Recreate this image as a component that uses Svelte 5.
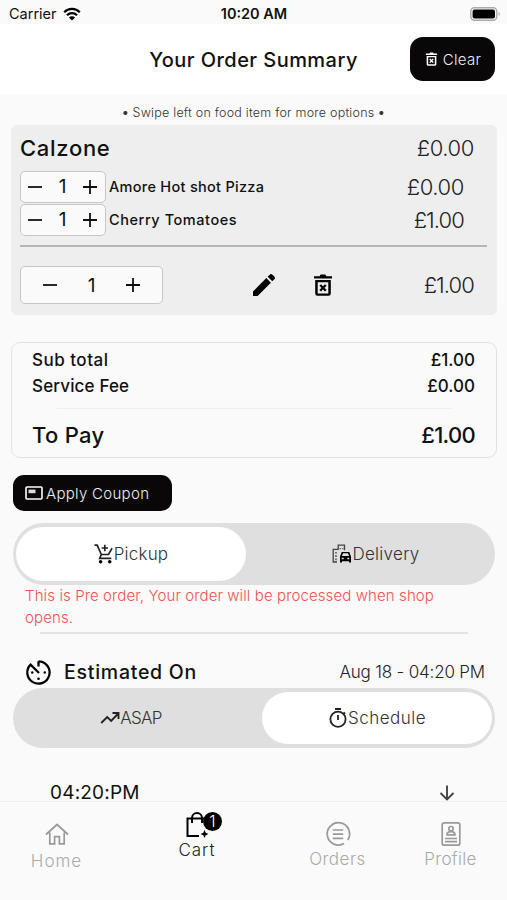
<script>
	let tabs = [
		{ name: 'Home', icon: 'home' },
		{ name: 'Cart', icon: 'bag', badge: 1 },
		{ name: 'Orders', icon: 'orders' },
		{ name: 'Profile', icon: 'profile' }
	];
	let active = $state('Cart');
	let mode = $state('Pickup');
	let time = $state('Schedule');
	let extras = $state([
		{ name: 'Amore Hot shot Pizza', qty: 1, price: 0, cls: 'amore' },
		{ name: 'Cherry Tomatoes', qty: 1, price: 1, cls: 'cherry' }
	]);
	let qty = $state(1);
	let total = $derived(extras.reduce((sum, e) => sum + e.price * e.qty, 0) * qty);
	const money = (n) => '£' + n.toFixed(2);
</script>

{#snippet trash()}
	<svg class="trash" viewBox="0 0 24 24">
		<path d="M3 3.200h5.500l1.200-1.700h4.600l1.200 1.700H21v2.400H3z" />
		<path fill-rule="evenodd" d="M4.200 7h15.600v13.500a2.200 2.200 0 0 1-2.200 2.200H6.400a2.200 2.200 0 0 1-2.200-2.200zM6.700 9.300v11.100h10.600V9.300z" />
		<path class="line" d="M9.200 12l5.600 5.800M14.800 12l-5.600 5.800" />
	</svg>
{/snippet}

{#snippet minus()}
	<svg class="sign" viewBox="0 0 16 16"><path d="M1 8h14" /></svg>
{/snippet}

{#snippet plus()}
	<svg class="sign" viewBox="0 0 16 16"><path d="M1 8h14M8 1v14" /></svg>
{/snippet}

<div class="app">
	<div class="status">
		<span class="carrier">Carrier
			<svg class="wifi" viewBox="0 0 18 14">
				<path d="M1.200 5.200a11 11 0 0 1 15.600 0M4 8.300a7 7 0 0 1 10 0" />
				<path class="dot" d="M9 13.600L5.900 10.500a4.400 4.400 0 0 1 6.200 0z" />
			</svg>
		</span>
		<b class="clock">10:20 AM</b>
		<svg class="battery" viewBox="0 0 32 14">
			<rect x=".8" y=".8" width="26" height="12.400" rx="3.600" fill="none" stroke="#aaa" stroke-width="1.400" />
			<rect x="2.600" y="2.600" width="22.400" height="8.800" rx="2" />
			<path d="M28.700 4.800q2.200 2.200 0 4.400z" fill="#aaa" />
		</svg>
	</div>

	<header>
		<h1>Your Order Summary</h1>
		<button class="clear">{@render trash()}<span>Clear</span></button>
	</header>

	<main>
		<p class="hint">• <span>Swipe left on food item for more options</span> •</p>

		<section class="item">
			<div class="item-head">
				<h2>Calzone</h2>
				<span class="price zero">£0.00</span>
			</div>
			{#each extras as extra}
				<div class="extra">
					<div class="stepper small">
						<button aria-label="less" onclick={() => extra.qty > 0 && extra.qty--}>{@render minus()}</button>
						<span>{extra.qty}</span>
						<button aria-label="more" onclick={() => extra.qty++}>{@render plus()}</button>
					</div>
					<span class="name {extra.cls}">{extra.name}</span>
					<span class="price" class:zero={extra.price === 0}>{money(extra.price)}</span>
				</div>
			{/each}
			<div class="item-foot">
				<div class="stepper">
					<button aria-label="less" onclick={() => qty > 1 && qty--}>{@render minus()}</button>
					<span>{qty}</span>
					<button aria-label="more" onclick={() => qty++}>{@render plus()}</button>
				</div>
				<svg class="pencil" viewBox="0 0 24 24">
					<path d="M1 18.400L14.300 5.100l4.600 4.600L5.600 23H1zM15.700 3.700l2-2a2 2 0 0 1 2.800 0l1.800 1.800a2 2 0 0 1 0 2.800l-2 2z" />
				</svg>
				{@render trash()}
				<span class="price">{money(total)}</span>
			</div>
		</section>

		<section class="totals">
			<div class="row"><span class="sub">Sub total</span><span class="amount">{money(total)}</span></div>
			<div class="row"><span class="fee">Service Fee</span><span class="amount">£0.00</span></div>
			<hr />
			<div class="row pay"><span>To Pay</span><span class="amount">{money(total)}</span></div>
		</section>

		<button class="coupon">
			<svg viewBox="0 0 18 14">
				<rect x="1" y="1" width="16" height="12" rx="1" fill="none" stroke="#fff" stroke-width="1.600" />
				<path d="M3.500 3.600h7v3.600h-7z" fill="#ddd" />
			</svg>
			<span>Apply Coupon</span>
		</button>

		<div class="toggle mode">
			<button class:on={mode === 'Pickup'} onclick={() => (mode = 'Pickup')}>
				<svg viewBox="0 0 20 20">
					<path d="M.5 1.200h2.700l4.100 9.300h7.200l3.600-6.300M7.300 10.500L5.700 14.300h11.600M10.800.8v6.400M7.600 4h6.400" fill="none" stroke="#222" stroke-width="1.700" />
					<circle cx="6.600" cy="17.700" r="1.800" /><circle cx="15.700" cy="17.700" r="1.800" />
				</svg>
				<span class="pickup">Pickup</span>
			</button>
			<button class:on={mode === 'Delivery'} onclick={() => (mode = 'Delivery')}>
				<svg viewBox="0 0 20 20">
					<path d="M5 18H1.200V5.300h5V1.200h6.300v5" fill="none" stroke="#444" stroke-width="1.300" />
					<path d="M3.200 8h1.600v1.600H3.200zm0 3.300h1.600v1.600H3.200zm0 3.300h1.600v1.600H3.200zM7.500 4h1.300v1.300H7.500zm2.700 0h1.300v1.300h-1.300z" fill="#555" />
					<path fill-rule="evenodd" d="M8 12.500l1.700-4.500h7.600l1.700 4.500V18.500h-2v-1.300H10v1.300H8zm2-.5h7l-1-2.700h-5zM9.700 13.800v1.500h2v-1.500zm5.600 0v1.500h2v-1.500z" />
				</svg>
				<span class="delivery">Delivery</span>
			</button>
		</div>

		<p class="notice"><span>This is Pre order, Your order will be processed when shop</span><br /><span class="last">opens.</span></p>
		<hr class="rule" />

		<div class="estimate">
			<svg viewBox="0 0 24 24">
				<path d="M12 1.300v5M12 1.300A10.700 10.700 0 1 1 4.400 4.400L12.500 12.500" fill="none" stroke="#000" stroke-width="2.200" />
				<circle cx="12" cy="18" r="1.300" /><circle cx="6" cy="12" r="1.200" /><circle cx="18" cy="12" r="1.200" />
			</svg>
			<h3>Estimated On</h3>
			<span class="date">Aug 18 - 04:20 PM</span>
		</div>

		<div class="toggle time">
			<button class:on={time === 'ASAP'} onclick={() => (time = 'ASAP')}>
				<svg viewBox="0 0 20 20">
					<path d="M1.200 15l6-6 4 4 7-7.500M12.500 5h6v6" fill="none" stroke="#222" stroke-width="1.900" />
				</svg>
				<span class="asap">ASAP</span>
			</button>
			<button class:on={time === 'Schedule'} onclick={() => (time = 'Schedule')}>
				<svg viewBox="0 0 20 20">
					<path d="M7 1h6M10 7v5M15.500 4.500l1.500 1.500" fill="none" stroke="#222" stroke-width="1.800" />
					<circle cx="10" cy="11.300" r="7.600" fill="none" stroke="#222" stroke-width="1.800" />
				</svg>
				<span class="schedule">Schedule</span>
			</button>
		</div>

		<div class="slot">
			<span>04:20:PM</span>
			<svg viewBox="0 0 16 16"><path d="M8 .5v14M1.500 8L8 14.500 14.500 8" /></svg>
		</div>
	</main>

	<nav>
		{#each tabs as tab}
			<button class="tab {tab.icon}" class:active={active === tab.name} onclick={() => (active = tab.name)}>
				<span class="icon">
					<svg viewBox="0 0 24 24">
						{#if tab.icon === 'home'}
							<path d="M1 12.500L12 2.500l11 10M4.800 10.500v11.300h4.800v-7.200h4.800v7.200h4.800V10.500" />
						{:else if tab.icon === 'bag'}
							<path stroke-width="2" d="M14 24H2.500V6.500h19V15M7 11V6a5 5 0 0 1 10 0v5" />
							<path fill="#000" stroke="none" d="M19.500 18l1.200 2.800 2.800 1.200-2.800 1.200-1.200 2.800-1.200-2.800-2.800-1.200 2.800-1.200z" />
						{:else if tab.icon === 'orders'}
							<path d="M21.800 18A11.200 11.200 0 1 0 18 21.600M6.800 8h10.400M6.800 12.200h10.400M6.800 16.400h10.400" />
						{:else}
							<rect x="3.200" y=".8" width="17.600" height="22.400" rx="2" />
							<circle cx="12" cy="6.700" r="2.200" />
							<path d="M8 12.800q0-3.200 4-3.200t4 3.200zM6 16.500h12M6 19.600h12" />
						{/if}
					</svg>
					{#if tab.badge}<i class="badge">{tab.badge}</i>{/if}
				</span>
				<span class="label">{tab.name}</span>
			</button>
		{/each}
	</nav>
</div>

<style>
	:global(body) {
		background: #fafafa;
	}
	.app {
		width: 507px;
		height: 900px;
		display: flex;
		flex-direction: column;
		overflow: hidden;
		background: #fafafa;
		color: #111;
		font-family: Inter, 'Open Sans', sans-serif;
	}
	h1, h2, h3, p {
		margin: 0;
		font-weight: 500;
	}
	button {
		display: flex;
		align-items: center;
		padding: 0;
		border: 0;
		background: none;
		color: inherit;
		font: inherit;
	}
	svg {
		display: block;
		flex: none;
		overflow: visible;
	}
	span {
		white-space: nowrap;
	}
	.status {
		height: 24px;
		display: grid;
		grid-template-columns: 1fr auto 1fr;
		align-items: center;
		padding: 3px 5px 0 9px;
		box-sizing: border-box;
		font-size: 14.500px;
	}
	.carrier {
		display: flex;
		align-items: center;
		gap: 6px;
	}
	.wifi {
		width: 18px;
		height: 14px;
		fill: none;
		stroke: #000;
		stroke-width: 2.200;
	}
	.wifi .dot {
		fill: #000;
		stroke: none;
	}
	.clock {
		font-weight: 600;
		padding-right: 3px;
	}
	.battery {
		width: 32px;
		height: 14px;
		justify-self: end;
	}
	header {
		height: 70px;
		flex: none;
		display: grid;
		grid-template-columns: 1fr auto 1fr;
		align-items: center;
		padding: 0 12px;
		background: #fff;
	}
	h1 {
		grid-column: 2;
		font-size: 20px;
		letter-spacing: 0.450px;
		margin-top: 2px;
	}
	.clear {
		justify-self: end;
		width: 85px;
		height: 44px;
		justify-content: center;
		gap: 4px;
		border-radius: 13px;
		background: #090708;
		color: #eee;
		font-size: 15px;
		font-weight: 300;
		letter-spacing: 0.300px;
	}
	.trash {
		width: 24px;
		height: 24px;
	}
	.trash .line {
		stroke: #000;
		stroke-width: 2.300;
	}
	.clear .trash {
		width: 15px;
		height: 16px;
		fill: #fff;
	}
	.clear .trash .line {
		stroke: #fff;
	}
	main {
		flex: 1;
		min-height: 0;
		overflow: hidden;
		display: flex;
		flex-direction: column;
	}
	main > * {
		flex: none;
	}
	.hint {
		height: 31px;
		padding-top: 5px;
		box-sizing: border-box;
		line-height: 27px;
		text-align: center;
		font-size: 12.500px;
		letter-spacing: 0.230px;
		color: #333;
	}
	.hint span {
		font-weight: 300;
	}
	.item {
		height: 190px;
		margin: 0 10px 0 11px;
		padding: 0 10px 0 9px;
		box-sizing: border-box;
		border-radius: 6px;
		background: #eee;
	}
	.item-head {
		height: 45px;
		display: flex;
		align-items: center;
		justify-content: space-between;
		padding-right: 13px;
	}
	h2 {
		font-size: 22px;
		letter-spacing: 0.700px;
	}
	.price {
		font-size: 22px;
		font-weight: 300;
		letter-spacing: -0.900px;
		color: #222;
	}
	.price.zero {
		letter-spacing: -0.400px;
	}
	.extra {
		height: 33px;
		display: flex;
		align-items: center;
		padding-right: 23px;
	}
	.extra .price {
		margin-left: auto;
	}
	.name {
		margin-left: 3px;
		font-size: 14.500px;
		font-weight: 500;
		letter-spacing: 0.290px;
	}
	.name.cherry {
		letter-spacing: 0.560px;
	}
	.stepper {
		width: 143px;
		height: 38px;
		display: flex;
		align-items: center;
		justify-content: space-between;
		padding: 0 21px;
		box-sizing: border-box;
		border: 1px solid #c6c6c6;
		border-radius: 5px;
		background: #fafafa;
		font-size: 19px;
	}
	.stepper.small {
		width: 86px;
		height: 32px;
		padding: 0 7px 0 6px;
	}
	.sign {
		width: 16px;
		height: 16px;
		stroke: #111;
		stroke-width: 1.800;
	}
	.item-foot {
		height: 78px;
		margin-top: 9px;
		display: flex;
		align-items: center;
		padding-right: 13px;
		border-top: 2px solid #b5b5b5;
		box-sizing: border-box;
	}
	.pencil {
		width: 24px;
		height: 24px;
		margin: 0 35px 0 89px;
	}
	.item-foot .price {
		margin-left: auto;
	}
	.totals {
		height: 116px;
		margin: 27px 10px 17px 11px;
		padding: 4px 21px 0 20px;
		box-sizing: border-box;
		border: 1px solid #e2e2e2;
		border-radius: 9px;
	}
	.row {
		height: 26px;
		display: flex;
		align-items: center;
		justify-content: space-between;
		font-size: 17px;
		font-weight: 500;
	}
	.sub {
		letter-spacing: 0.500px;
	}
	.fee {
		letter-spacing: 0.150px;
	}
	.totals hr {
		margin: 9px 23px 12px 25px;
		border: 0;
		border-top: 1px solid #eee;
	}
	.row.pay {
		font-size: 22px;
		height: 28px;
		letter-spacing: 0.300px;
	}
	.pay .amount {
		letter-spacing: -0.700px;
	}
	.coupon {
		width: 159px;
		height: 36px;
		margin-left: 13px;
		padding-left: 12px;
		gap: 3px;
		border-radius: 11px;
		background: #090708;
		color: #eee;
		font-size: 15px;
		font-weight: 300;
		letter-spacing: 0.300px;
	}
	.coupon svg {
		width: 18px;
		height: 14px;
	}
	.toggle {
		height: 62px;
		width: 482px;
		margin: 12px 0 0 13px;
		padding: 4px 3px;
		box-sizing: border-box;
		display: flex;
		border-radius: 31px;
		background: #dfdfdf;
		color: #333;
		font-size: 17px;
		font-weight: 300;
	}
	.toggle button {
		flex: 1;
		justify-content: center;
		border-radius: 27px;
	}
	.toggle.mode button:first-child {
		flex: none;
		width: 230px;
	}
	.toggle.mode button:last-child {
		padding-left: 14px;
	}
	.toggle .on {
		background: #fff;
	}
	.toggle svg {
		width: 20px;
		height: 20px;
	}
	.pickup {
		letter-spacing: 0.200px;
	}
	.delivery {
		letter-spacing: 0.300px;
	}
	.asap {
		letter-spacing: -0.700px;
	}
	.schedule {
		letter-spacing: 0.500px;
	}
	.notice {
		padding-left: 25px;
		height: 44px;
		line-height: 22px;
		font-size: 15px;
		font-weight: 300;
		letter-spacing: 0.110px;
		color: #ef5350;
	}
	.rule {
		width: 428px;
		height: 2px;
		margin: 3px 0 0 40px;
		border: 0;
		background: #e3e3e3;
	}
	.estimate {
		height: 54px;
		padding: 22px 22px 0 26px;
		box-sizing: border-box;
		display: flex;
		align-items: center;
	}
	.estimate svg {
		width: 25px;
		height: 25px;
	}
	h3 {
		margin-left: 13px;
		font-size: 19.500px;
		letter-spacing: 0.750px;
	}
	.date {
		margin-left: auto;
		font-size: 17px;
		font-weight: 300;
		letter-spacing: -0.170px;
		color: #222;
	}
	.toggle.time {
		height: 60px;
		margin-top: 0;
	}
	.toggle.time button:first-child {
		padding-right: 16px;
	}
	.toggle.time button:last-child {
		flex: none;
		width: 230px;
	}
	.slot {
		height: 16px;
		margin-top: 37px;
		padding: 0 52px 0 50px;
		display: flex;
		align-items: center;
		justify-content: space-between;
		font-size: 19px;
		line-height: 16px;
		letter-spacing: 0.200px;
	}
	.slot svg {
		width: 16px;
		height: 16px;
		fill: none;
		stroke: #444;
		stroke-width: 1.900;
	}
	nav {
		height: 99px;
		flex: none;
		display: flex;
		border-top: 1px solid #f0f0f0;
		box-sizing: border-box;
		background: #fafafa;
	}
	.tab {
		width: 113px;
		flex-direction: column;
		justify-content: flex-start;
		padding-top: 20px;
		color: #aaa;
		font-size: 17px;
		font-weight: 300;
		letter-spacing: 0.500px;
	}
	.tab svg {
		width: 24px;
		height: 24px;
		fill: none;
		stroke: #999;
		stroke-width: 1.700;
	}
	.icon {
		position: relative;
	}
	.label {
		line-height: 24px;
		margin-top: 1px;
	}
	.tab.home .label {
		margin-top: 3px;
		letter-spacing: 1px;
	}
	.tab.bag {
		width: 168px;
		padding-top: 10px;
	}
	.tab.bag .label {
		margin-top: 2px;
		letter-spacing: 1px;
	}
	.tab.profile .label {
		letter-spacing: 0.300px;
	}
	.tab.active {
		color: #222;
	}
	.tab.active svg {
		stroke: #000;
	}
	.badge {
		position: absolute;
		left: 18px;
		top: 0;
		width: 19px;
		height: 19px;
		border-radius: 50%;
		background: #000;
		color: #fff;
		font-size: 16px;
		font-style: normal;
		letter-spacing: 0;
		line-height: 19px;
		text-align: center;
	}
</style>
